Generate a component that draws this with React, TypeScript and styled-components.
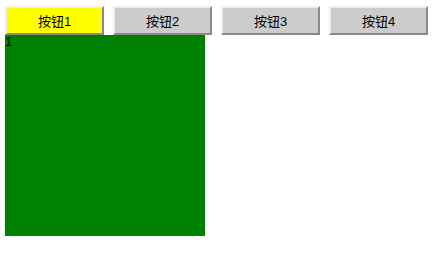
import React, { useState } from "react";
import styled, { createGlobalStyle } from "styled-components";

const GlobalStyle = createGlobalStyle`
  body {
    margin: 0;
    background: #ffffff;
    font-family: "Liberation Sans", "Noto Sans CJK SC", sans-serif;
  }
`;

const Page = styled("div")`
  padding: 6px 5px;
`;

const TabBar = styled("div")`
  display: flex;
  gap: 9px;
`;

const TabButton = styled("button")<{ active?: boolean }>`
  width: 99px;
  height: 29px;
  margin: 0;
  padding: 0;
  box-sizing: border-box;
  background-color: ${(props) => (props.active ? "#ffff00" : "#cccccc")};
  border: 2px solid;
  border-color: #eeeeee #888888 #888888 #eeeeee;
  font-family: "Liberation Sans", "Noto Sans CJK SC", sans-serif;
  font-size: 13px;
  color: #000000;
  cursor: pointer;
`;

const Panel = styled("div")`
  width: 200px;
  height: 201px;
  background-color: #008000;
  color: #000000;
  font-size: 13px;
  line-height: 14px;
`;

const tabs = ["按钮1", "按钮2", "按钮3", "按钮4"];

export default function App() {
  const [active, setActive] = useState(0);

  return (
    <Page>
      <GlobalStyle />
      <TabBar>
        {tabs.map((label, i) => (
          <TabButton key={label} active={i === active} onClick={() => setActive(i)}>
            {label}
          </TabButton>
        ))}
      </TabBar>
      <Panel>{active + 1}</Panel>
    </Page>
  );
}
